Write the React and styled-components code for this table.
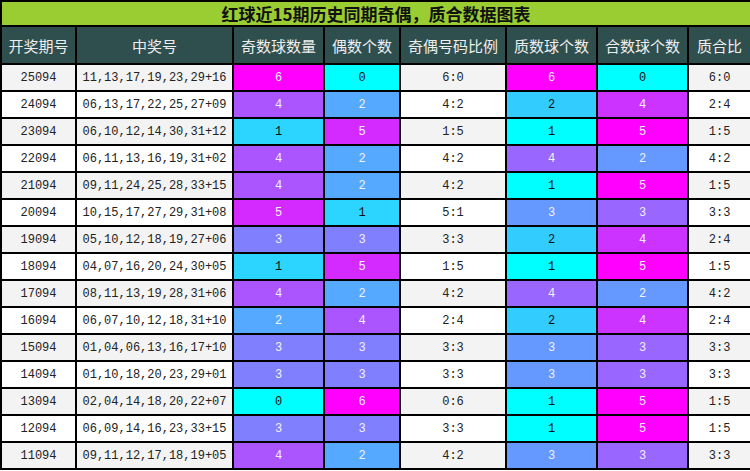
import React from "react"
import styled, { createGlobalStyle } from "styled-components"

const GlobalStyle = createGlobalStyle`
  html, body {
    margin: 0;
    padding: 0;
    background: #fff;
  }
`

const Table = styled.table`
  width: 750px;
  table-layout: fixed;
  border-collapse: collapse;
  border: 2px solid #000;
`

const TitleCell = styled.th`
  height: 23px;
  padding: 0;
  background: #9acd32;
  border: 2px solid #000;
  color: #111;
  font-family: "Noto Sans CJK SC", "Liberation Sans", sans-serif;
  font-size: 17px;
  font-weight: 700;
  line-height: 23px;
  text-align: center;
`

const HeadCell = styled.th`
  height: 36px;
  padding: 0;
  background: #2f4f4f;
  border: 2px solid #000;
  color: #eee;
  font-family: "Noto Sans CJK SC", sans-serif;
  font-size: 15px;
  font-weight: 400;
  text-align: center;
`

const Cell = styled.td`
  height: 25px;
  padding: 0;
  border: 2px solid #000;
  background: ${p => (p.$shade ? "#f3f3f3" : "#fff")};
  color: #222;
  font-family: "Liberation Mono", "DejaVu Sans Mono", monospace;
  font-size: 12px;
  text-align: center;
`

const ColorCell = styled(Cell)`
  background: ${p => p.$bg};
  color: ${p => p.$fg};
`

const rows = [
  ["25094", "11,13,17,19,23,29+16", 6, 0, 6, 0],
  ["24094", "06,13,17,22,25,27+09", 4, 2, 2, 4],
  ["23094", "06,10,12,14,30,31+12", 1, 5, 1, 5],
  ["22094", "06,11,13,16,19,31+02", 4, 2, 4, 2],
  ["21094", "09,11,24,25,28,33+15", 4, 2, 1, 5],
  ["20094", "10,15,17,27,29,31+08", 5, 1, 3, 3],
  ["19094", "05,10,12,18,19,27+06", 3, 3, 2, 4],
  ["18094", "04,07,16,20,24,30+05", 1, 5, 1, 5],
  ["17094", "08,11,13,19,28,31+06", 4, 2, 4, 2],
  ["16094", "06,07,10,12,18,31+10", 2, 4, 2, 4],
  ["15094", "01,04,06,13,16,17+10", 3, 3, 3, 3],
  ["14094", "01,10,18,20,23,29+01", 3, 3, 3, 3],
  ["13094", "02,04,14,18,20,22+07", 0, 6, 1, 5],
  ["12094", "06,09,14,16,23,33+15", 3, 3, 1, 5],
  ["11094", "09,11,12,17,18,19+05", 4, 2, 3, 3],
]

const widths = [75, 157, 91, 76, 106, 91, 91, 63]
const heads = ["开奖期号", "中奖号", "奇数球数量", "偶数个数", "奇偶号码比例", "质数球个数", "合数球个数", "质合比"]

// cyan -> magenta scale over each column's own min..max
const scale = (v, min, max) => {
  const t = (v - min) / (max - min)
  const r = Math.round(255 * t)
  const g = Math.round(255 * (1 - t))
  return { bg: `rgb(${r},${g},255)`, fg: t < 0.3 ? "#111" : "#f2f2f2" }
}

const Shade = ({ v, min, max, shade }) => {
  const c = scale(v, min, max)
  return <ColorCell $shade={shade} $bg={c.bg} $fg={c.fg}>{v}</ColorCell>
}

export default function App() {
  return (
    <>
      <GlobalStyle />
      <Table>
        <colgroup>
          {widths.map((w, i) => <col key={i} style={{ width: w }} />)}
        </colgroup>
        <thead>
          <tr>
            <TitleCell colSpan={8}>红球近15期历史同期奇偶，质合数据图表</TitleCell>
          </tr>
          <tr>
            {heads.map(h => <HeadCell key={h}>{h}</HeadCell>)}
          </tr>
        </thead>
        <tbody>
          {rows.map(([issue, nums, odd, even, prime, comp], i) => {
            const shade = i % 2 === 0
            return (
              <tr key={issue}>
                <Cell $shade={shade}>{issue}</Cell>
                <Cell $shade={shade}>{nums}</Cell>
                <Shade v={odd} min={0} max={6} shade={shade} />
                <Shade v={even} min={0} max={6} shade={shade} />
                <Cell $shade={shade}>{odd}:{even}</Cell>
                <Shade v={prime} min={1} max={6} shade={shade} />
                <Shade v={comp} min={0} max={5} shade={shade} />
                <Cell $shade={shade}>{prime}:{comp}</Cell>
              </tr>
            )
          })}
        </tbody>
      </Table>
    </>
  )
}
